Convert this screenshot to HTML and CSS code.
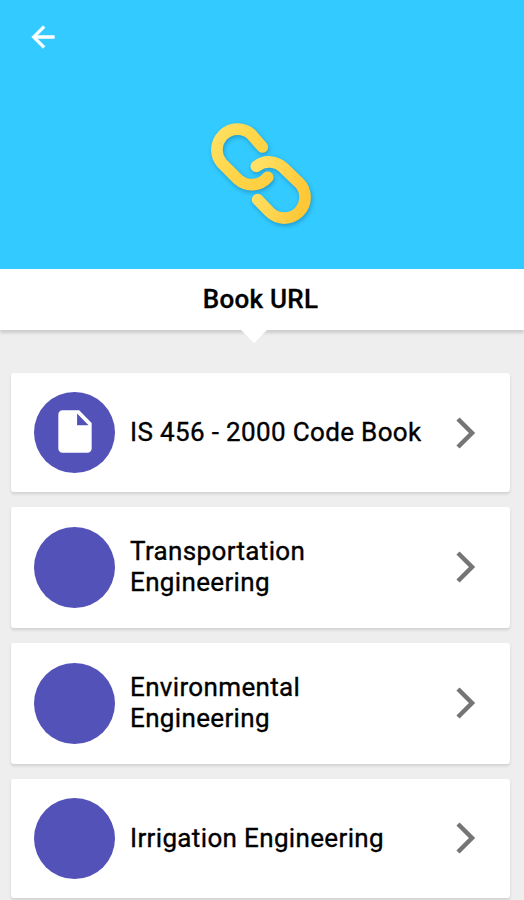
FILE: index.html
```html
<!DOCTYPE html>
<html lang="en">
<head>
    <meta charset="UTF-8">
    <meta name="viewport" content="width=device-width, initial-scale=1.0">
    <title>Book URL</title>
    <link rel="stylesheet" href="styles.css">
</head>
<body>

    <header class="hero">
        <a href="#" class="back" aria-label="Back">
            <svg width="34" height="34" viewBox="0 0 24 24"><path fill="#fff" stroke="#fff" stroke-width="0.4" d="M20 11H7.83l5.59-5.59L12 4l-8 8 8 8 1.41-1.41L7.83 13H20z"/></svg>
        </a>
        <!-- Chain link -->
        <svg class="chain" width="140" height="140" viewBox="0 0 420 420">
            <defs>
                <linearGradient id="gold-left" gradientUnits="userSpaceOnUse" x1="60" y1="90" x2="250" y2="200">
                    <stop offset="0" stop-color="#ffe165"/>
                    <stop offset="0.5" stop-color="#fed649"/>
                    <stop offset="1" stop-color="#fecf42"/>
                </linearGradient>
                <linearGradient id="gold-right" gradientUnits="userSpaceOnUse" x1="185" y1="230" x2="350" y2="270">
                    <stop offset="0" stop-color="#ffe165"/>
                    <stop offset="1" stop-color="#fec736"/>
                </linearGradient>
            </defs>
            <path stroke="url(#gold-left)" d="M217 126L184 88A62 62 0 0 0 96 175L145 224A62 62 0 0 0 233 217"/>
            <path stroke="url(#gold-right)" d="M199 184A62 62 0 0 1 282 190L327 233A62 62 0 0 1 239 321L203 284"/>
        </svg>
    </header>

    <div class="title-bar">
        <h1>Book URL</h1>
    </div>

    <main class="book-list">
        <a href="#" class="card">
            <span class="circle">
                <svg class="file" width="50" height="51" viewBox="0 0 24 24" preserveAspectRatio="none"><path fill="#fff" d="M6 2c-1.100 0-2 .9-2 2v16c0 1.100.9 2 2 2h12c1.100 0 2-.9 2-2V8l-6-6H6zm7 7V3.500L18.500 9H13z"/></svg>
            </span>
            <span class="name">IS 456 - 2000 Code Book</span>
            <svg class="arrow" width="20" height="32" viewBox="0 0 20 32"><path d="M2 2L16 16L2 30"/></svg>
        </a>
        <a href="#" class="card two-line">
            <span class="circle"></span>
            <span class="name">Transportation Engineering</span>
            <svg class="arrow" width="20" height="32" viewBox="0 0 20 32"><path d="M2 2L16 16L2 30"/></svg>
        </a>
        <a href="#" class="card two-line">
            <span class="circle"></span>
            <span class="name">Environmental Engineering</span>
            <svg class="arrow" width="20" height="32" viewBox="0 0 20 32"><path d="M2 2L16 16L2 30"/></svg>
        </a>
        <a href="#" class="card">
            <span class="circle"></span>
            <span class="name">Irrigation Engineering</span>
            <svg class="arrow" width="20" height="32" viewBox="0 0 20 32"><path d="M2 2L16 16L2 30"/></svg>
        </a>
    </main>

</body>
</html>
```
FILE: styles.css
```css
/* General styling */
* {
    box-sizing: border-box;
}

body {
    font-family: Roboto, sans-serif;
    margin: 0;
    height: 900px;
    overflow: hidden;
    background: #eeeeee;
    color: #000;
}

a {
    color: inherit;
    text-decoration: none;
}

svg {
    display: block;
}

/* Blue header */
.hero {
    height: 269px;
    padding: 20px 24px;
    background: #33caff;
}

.back {
    display: block;
    width: 34px;
    margin-left: 2px;
}

.chain {
    margin: 51px 0 0 166px;
    fill: none;
    stroke-width: 35;
    stroke-linecap: round;
    filter: drop-shadow(1px 2px 2px rgba(0, 70, 110, 0.35));
}

.title-bar {
    position: relative;
    height: 61px;
    background: #fff;
    box-shadow: 0 3px 3px rgba(0, 0, 0, 0.14);
    text-align: center;
}

/* Small pointer under the title */
.title-bar::after {
    content: "";
    position: absolute;
    top: 60px;
    left: 240px;
    border: 14px solid transparent;
    border-top-color: #fff;
    border-bottom: 0;
}

h1 {
    margin: 0;
    padding-right: 3px;
    font-size: 26px;
    font-weight: 500;
    line-height: 60px;
    letter-spacing: 0.25px;
    -webkit-text-stroke: 0.3px #000;
}

/* Cards */
.book-list {
    display: flex;
    flex-direction: column;
    gap: 14.6px;
    padding: 43px 14px 0 11px;
}

.card {
    display: flex;
    align-items: center;
    flex-shrink: 0;
    height: 119px;
    padding: 0 34px 0 23px;
    background: #fff;
    border-radius: 3px;
    box-shadow: 0 2px 3px rgba(0, 0, 0, 0.12);
}

.two-line {
    height: 121.5px;
}

.circle {
    display: flex;
    align-items: center;
    justify-content: center;
    width: 81px;
    height: 81px;
    margin-right: 15px;
    border-radius: 50%;
    background: #5352b8;
    flex-shrink: 0;
}

.file {
    margin-bottom: 3px;
}

.name {
    width: 300px;
    font-size: 26px;
    line-height: 31px;
    letter-spacing: 0.35px;
    -webkit-text-stroke: 0.35px #000;
}

.two-line .name {
    width: 200px;
}

.arrow {
    margin-left: auto;
    fill: none;
    stroke: #757575;
    stroke-width: 4.500;
}
```
